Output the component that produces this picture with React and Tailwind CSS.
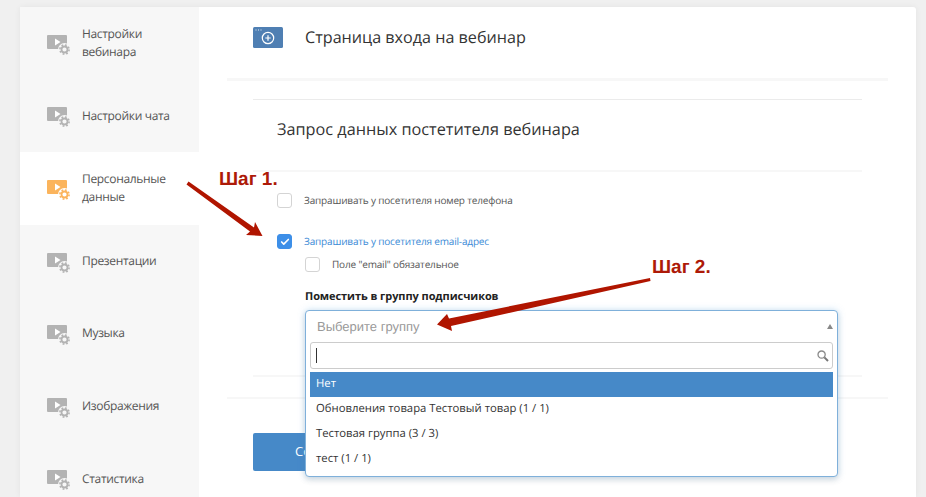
import React from "react";
import { Check } from "lucide-react";

function VideoGear({ color }) {
  return (
    <svg width="24" height="22" viewBox="0 0 24 22" className="shrink-0">
      <rect x="0" y="0" width="20" height="14" rx="1" fill={color} />
      <path d="M8 3.5 L13.5 7 L8 10.5 Z" fill="#fff" />
      <circle cx="17.5" cy="14.5" r="6.5" fill={color === "#fbb45c" ? "#fff" : "#f7f7f7"} />
      <circle cx="17.5" cy="14.5" r="3" fill="none" stroke={color} strokeWidth="1.8" />
      <circle cx="17.5" cy="14.5" r="4.6" fill="none" stroke={color} strokeWidth="1.6" strokeDasharray="1.8 1.8" />
    </svg>
  );
}

function NavItem({ lines, active }) {
  return (
    <div className={"flex h-[72.6px] items-center gap-[11px] pl-[27px] " + (active ? "bg-white" : "")}>
      <div className="mt-[5px]">
        <VideoGear color={active ? "#fbb45c" : "#b3b3b3"} />
      </div>
      <div className="text-[12px] leading-[18.5px] tracking-[-0.33px] text-[#555]">
        {lines.map((l) => (
          <div key={l}>{l}</div>
        ))}
      </div>
    </div>
  );
}

function Box({ checked, className = "" }) {
  return (
    <div
      className={
        "flex h-[15px] w-[15px] shrink-0 items-center justify-center rounded-[3px] border " +
        (checked ? "border-[#3d8fe8] bg-[#3d8fe8] " : "border-[#d4d4d4] bg-white ") +
        className
      }
    >
      {checked && <Check size={10} strokeWidth={4} color="#fff" />}
    </div>
  );
}

const Divider = ({ className }) => <div className={className} />;

export default function App() {
  return (
    <div
      className="relative h-[497px] w-[926px] overflow-hidden bg-[#f0f0f0] pl-[20px] pr-[10px] pt-[7px] [text-rendering:geometricPrecision]"
      style={{ fontFamily: '"Open Sans", "Noto Sans", sans-serif' }}
    >
      <div className="flex h-[490px] rounded-t-[3px] bg-white shadow-[0_0_6px_rgba(0,0,0,0.06)]">
        <aside className="w-[179px] shrink-0 bg-[#f7f7f7]">
          <NavItem lines={["Настройки", "вебинара"]} />
          <NavItem lines={["Настройки чата"]} />
          <NavItem lines={["Персональные", "данные"]} active />
          <NavItem lines={["Презентации"]} />
          <NavItem lines={["Музыка"]} />
          <NavItem lines={["Изображения"]} />
          <NavItem lines={["Статистика"]} />
        </aside>

        <main className="min-w-0 flex-1 pl-[28px] pr-[28px]">
          <div className="flex h-[71px] items-center pb-[12px] pl-[26px] pt-[1px]">
            <svg width="30" height="21" viewBox="0 0 30 21" className="shrink-0">
              <rect x="0" y="0" width="30" height="21" rx="1.5" fill="#4f7fb3" />
              <path d="M2.5 3h1M5 3h1M7.5 3h1" stroke="#dfe9f4" strokeWidth="1.2" />
              <circle cx="15" cy="11" r="5.7" fill="none" stroke="#fff" strokeWidth="1.2" />
              <path d="M12.3 11h5.4M15 8.3v5.4" stroke="#fff" strokeWidth="1.2" />
            </svg>
            <h1 className="ml-[22px] text-[16.15px] font-normal text-[#333]">Страница входа на вебинар</h1>
          </div>
          <Divider className="h-[3px] bg-[#f7f7f7]" />

          <section className="pl-[26px] pr-[26px]">
            <Divider className="mt-[18px] h-px bg-[#ebebeb]" />
            <h2 className="flex h-[59px] items-center pb-[1px] pl-[24px] text-[16.25px] font-normal text-[#333]">
              Запрос данных постетителя вебинара
            </h2>
            <Divider className="mt-[11px] h-[2px] bg-[#f7f7f7]" />

            <div className="pl-[24px] pt-[21px]">
              <div className="flex h-[15px] items-center gap-[12px]">
                <Box />
                <span className="text-[10px] tracking-[-0.17px] text-[#555]">
                  Запрашивать у посетителя номер телефона
                </span>
              </div>
              <div className="mt-[26px] flex h-[15px] items-center gap-[12px]">
                <Box checked />
                <span className="text-[10px] tracking-[-0.17px] text-[#3a8ad6]">
                  Запрашивать у посетителя email-адрес
                </span>
              </div>
              <div className="ml-[28px] mt-[8px] flex h-[15px] items-center gap-[12px]">
                <Box />
                <span className="text-[10px] tracking-[-0.17px] text-[#555]">Поле "email" обязательное</span>
              </div>

              <div className="ml-[28px] mt-[16px] text-[11px] font-bold leading-[18px] tracking-[-0.07px] text-[#222]">
                Поместить в группу подписчиков
              </div>

              <div className="relative ml-[28px] mt-[4px] h-[33px] w-[533px]">
                <div className="absolute left-0 right-0 top-0 z-10 h-[167px] rounded-[4px] border border-[#7fb0da] bg-white px-[4px] shadow-[0_0_7px_rgba(102,175,233,0.35),0_3px_6px_rgba(0,0,0,0.12)]">
                  <div className="flex h-[31px] items-center justify-between pl-[7px]">
                    <span className="text-[13px] text-[#999]" style={{ fontFamily: '"Liberation Sans", sans-serif' }}>
                      Выберите группу
                    </span>
                    <span className="h-0 w-0 border-x-[3px] border-b-[5px] border-x-transparent border-b-[#888]" />
                  </div>
                  <div className="flex h-[27px] items-center justify-between rounded-[3px] border border-[#ccc] bg-white pl-[5px] pr-[3px]">
                    <span className="h-[15px] w-px bg-[#333]" />
                    <svg width="12" height="12" viewBox="0 0 12 12">
                      <circle cx="4.6" cy="4.6" r="3.6" fill="none" stroke="#8a8a8a" strokeWidth="1.3" />
                      <path d="M7.4 7.4 L11 11" stroke="#777" strokeWidth="2" />
                    </svg>
                  </div>
                  <div className="mt-[3px] text-[11.3px] text-[#333]">
                    <div className="flex h-[25px] items-center bg-[#4689c8] pb-[1px] pl-[6px] text-white">Нет</div>
                    <div className="flex h-[25px] items-center pl-[6px]">
                      Обновления товара Тестовый товар (1 / 1)
                    </div>
                    <div className="flex h-[25px] items-center pl-[6px]">Тестовая группа (3 / 3)</div>
                    <div className="flex h-[25px] items-center pl-[6px]">тест (1 / 1)</div>
                  </div>
                </div>
              </div>
            </div>
            <Divider className="mt-[32px] h-[2px] bg-[#f7f7f7]" />
          </section>
          <Divider className="mt-[20px] h-[2px] bg-[#f7f7f7]" />

          <div className="pl-[26px] pt-[34px]">
            <button className="h-[38px] w-[150px] rounded-[2px] bg-[#4689c8] pl-[42px] text-left text-[13px] text-white">
              Сохранить
            </button>
          </div>
        </main>
      </div>

      <span
        className="absolute left-[219px] top-[169px] z-20 text-[19px] font-bold leading-[22px] text-[#ad1a08]"
        style={{ fontFamily: '"Liberation Sans", sans-serif' }}
      >
        Шаг 1.
      </span>
      <span
        className="absolute left-[652px] top-[257px] z-20 text-[19px] font-bold leading-[22px] text-[#ad1a08]"
        style={{ fontFamily: '"Liberation Sans", sans-serif' }}
      >
        Шаг 2.
      </span>
      <svg width="926" height="497" viewBox="0 0 926 497" className="pointer-events-none absolute left-0 top-0 z-20">
        <path d="M188.5 181.5 L254 227.5 L255 222 L262.5 236 L246 235 L250 231.5 L186.5 184.5 Z" fill="#b01500" />
        <path d="M650 278 L650.5 281 L451 326 L452 331 L437 324.5 L447 314 L449 318.5 Z" fill="#b01500" />
      </svg>
    </div>
  );
}
